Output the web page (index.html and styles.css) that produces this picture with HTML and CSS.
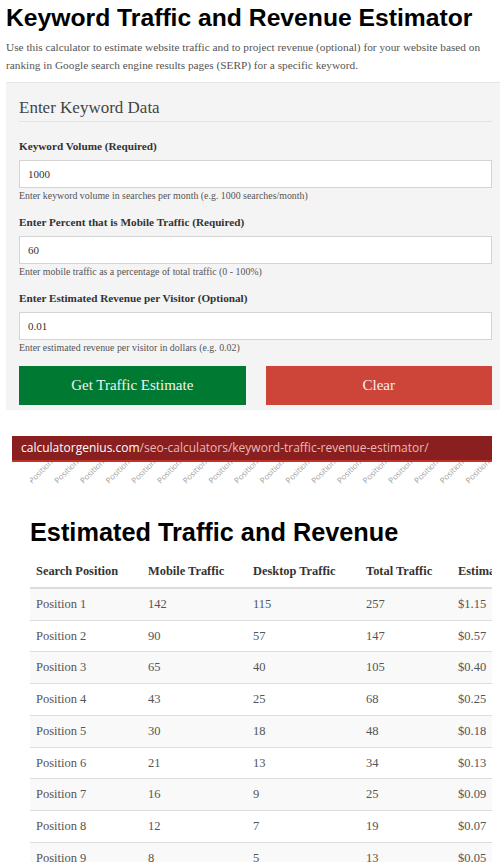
FILE: index.html
```html
<!DOCTYPE html>
<html lang="en">
<head>
<meta charset="utf-8">
<title>Keyword Traffic and Revenue Estimator</title>
<link rel="stylesheet" href="styles.css">
</head>
<body>
<div class="page">
  <h1 class="title">Keyword Traffic and Revenue Estimator</h1>
  <p class="intro">Use this calculator to estimate website traffic and to project revenue (optional) for your website based on ranking in Google search engine results pages (SERP) for a specific keyword.</p>

  <div class="panel">
    <h2 class="panel-title">Enter Keyword Data</h2>

    <div class="field">
      <label class="field-label">Keyword Volume (Required)</label>
      <div class="input">1000</div>
      <div class="help">Enter keyword volume in searches per month (e.g. 1000 searches/month)</div>
    </div>

    <div class="field">
      <label class="field-label">Enter Percent that is Mobile Traffic (Required)</label>
      <div class="input">60</div>
      <div class="help">Enter mobile traffic as a percentage of total traffic (0 - 100%)</div>
    </div>

    <div class="field">
      <label class="field-label">Enter Estimated Revenue per Visitor (Optional)</label>
      <div class="input">0.01</div>
      <div class="help">Enter estimated revenue per visitor in dollars (e.g. 0.02)</div>
    </div>

    <div class="buttons">
      <div class="btn btn-go">Get Traffic Estimate</div>
      <div class="btn btn-clear">Clear</div>
    </div>
  </div>

  <div class="urlbar"><span class="host">calculatorgenius.com</span><span class="path">/seo-calculators/keyword-traffic-revenue-estimator/</span></div>
  <svg class="axis" width="468" height="25" viewBox="0 0 468 25" xmlns="http://www.w3.org/2000/svg">
    <g class="axis-labels">
      <text x="2" y="22" transform="rotate(-45 2 22)">Position 1</text>
      <text x="27.7" y="22" transform="rotate(-45 27.7 22)">Position 2</text>
      <text x="53.4" y="22" transform="rotate(-45 53.4 22)">Position 3</text>
      <text x="79.1" y="22" transform="rotate(-45 79.1 22)">Position 4</text>
      <text x="104.8" y="22" transform="rotate(-45 104.8 22)">Position 5</text>
      <text x="130.5" y="22" transform="rotate(-45 130.5 22)">Position 6</text>
      <text x="156.2" y="22" transform="rotate(-45 156.2 22)">Position 7</text>
      <text x="181.9" y="22" transform="rotate(-45 181.9 22)">Position 8</text>
      <text x="207.6" y="22" transform="rotate(-45 207.6 22)">Position 9</text>
      <text x="233.3" y="22" transform="rotate(-45 233.3 22)">Position 10</text>
      <text x="259" y="22" transform="rotate(-45 259 22)">Position 11</text>
      <text x="284.7" y="22" transform="rotate(-45 284.7 22)">Position 12</text>
      <text x="310.4" y="22" transform="rotate(-45 310.4 22)">Position 13</text>
      <text x="336.1" y="22" transform="rotate(-45 336.1 22)">Position 14</text>
      <text x="361.8" y="22" transform="rotate(-45 361.8 22)">Position 15</text>
      <text x="387.5" y="22" transform="rotate(-45 387.5 22)">Position 16</text>
      <text x="413.2" y="22" transform="rotate(-45 413.2 22)">Position 17</text>
      <text x="438.9" y="22" transform="rotate(-45 438.9 22)">Position 18</text>
    </g>
  </svg>

  <h2 class="results-title">Estimated Traffic and Revenue</h2>
  <div class="table-wrap">
    <table class="results">
      <colgroup>
        <col class="c1"><col class="c2"><col class="c3"><col class="c4"><col class="c5">
      </colgroup>
      <thead>
        <tr><th>Search Position</th><th>Mobile Traffic</th><th>Desktop Traffic</th><th>Total Traffic</th><th>Estimated Revenue</th></tr>
      </thead>
      <tbody>
        <tr><td>Position 1</td><td>142</td><td>115</td><td>257</td><td>$1.15</td></tr>
        <tr><td>Position 2</td><td>90</td><td>57</td><td>147</td><td>$0.57</td></tr>
        <tr><td>Position 3</td><td>65</td><td>40</td><td>105</td><td>$0.40</td></tr>
        <tr><td>Position 4</td><td>43</td><td>25</td><td>68</td><td>$0.25</td></tr>
        <tr><td>Position 5</td><td>30</td><td>18</td><td>48</td><td>$0.18</td></tr>
        <tr><td>Position 6</td><td>21</td><td>13</td><td>34</td><td>$0.13</td></tr>
        <tr><td>Position 7</td><td>16</td><td>9</td><td>25</td><td>$0.09</td></tr>
        <tr><td>Position 8</td><td>12</td><td>7</td><td>19</td><td>$0.07</td></tr>
        <tr><td>Position 9</td><td>8</td><td>5</td><td>13</td><td>$0.05</td></tr>
        <tr><td>Position 10</td><td>6</td><td>4</td><td>10</td><td>$0.04</td></tr>
      </tbody>
    </table>
  </div>
</div>
</body>
</html>
```

FILE: styles.css
```css
html, body {
  margin: 0;
  padding: 0;
  background: #ffffff;
  overflow: hidden;
}

body {
  font-family: "Liberation Serif", "Times New Roman", serif;
  color: #333;
}

.page {
  padding-left: 6px;
}

.title {
  font-family: "Liberation Sans", Arial, sans-serif;
  font-weight: bold;
  font-size: 24.7px;
  line-height: 30px;
  color: #000;
  margin: 3px 0 0 0;
}

.intro {
  font-size: 11.3px;
  line-height: 18px;
  color: #555;
  margin: 5px 6px 0 0;
}

.panel {
  margin-top: 8px;
  background: #f4f4f4;
  border-top: 1px solid #e6e6e6;
  padding: 15px 8px 5px 13px;
}

.panel-title {
  font-weight: normal;
  font-size: 17px;
  line-height: 20px;
  color: #444;
  margin: 0;
  padding-bottom: 3px;
  border-bottom: 1px solid #e3e3e3;
}

.field {
  display: flex;
  flex-direction: column;
}

.field-label {
  display: block;
  margin-top: 17px;
  font-weight: bold;
  font-size: 11.2px;
  line-height: 14px;
  color: #333;
}

.field + .field .field-label {
  margin-top: 13px;
}

.input {
  margin-top: 7px;
  box-sizing: border-box;
  height: 28px;
  border: 1px solid #d4d4d4;
  background: #fff;
  padding: 0 8px;
  font-size: 11px;
  line-height: 26px;
  color: #333;
}

.help {
  margin-top: 2px;
  font-size: 9.9px;
  line-height: 12px;
  color: #555;
}

.buttons {
  display: flex;
  gap: 20px;
  margin-top: 12px;
}

.btn {
  flex: 1;
  height: 39px;
  line-height: 39px;
  text-align: center;
  font-size: 15px;
  color: #f2f2f2;
}

.btn-go {
  background: #007a33;
}

.btn-clear {
  background: #cc4538;
}

.urlbar {
  margin: 26px 8px 0 6px;
  height: 24px;
  line-height: 23px;
  background: #8a1f1f;
  border-bottom: 2px solid #c2302a;
  padding-left: 9px;
  font-family: "Open Sans", "Noto Sans", sans-serif;
  font-size: 12px;
  white-space: nowrap;
  overflow: hidden;
}

.host {
  color: #ffffff;
}

.path {
  color: #e9b9b7;
}

.axis {
  display: block;
  margin-left: 24px;
  overflow: hidden;
}

.axis-labels {
  font-family: "Open Sans", "Noto Sans", sans-serif;
  font-size: 8px;
  fill: #a0a0a0;
}

.results-title {
  font-family: "Liberation Sans", Arial, sans-serif;
  font-weight: bold;
  font-size: 25.3px;
  line-height: 30px;
  color: #000;
  margin: 30px 0 0 24px;
}

.table-wrap {
  margin: 8px 8px 0 24px;
  overflow: hidden;
}

.results {
  table-layout: fixed;
  width: 540px;
  border-collapse: collapse;
  border-spacing: 0;
}

.c1 { width: 112px; }
.c2 { width: 105px; }
.c3 { width: 113px; }
.c4 { width: 92px; }
.c5 { width: 118px; }

.results th {
  text-align: left;
  font-size: 12.4px;
  font-weight: bold;
  color: #333;
  padding: 9px 6px 8px 6px;
  line-height: 15px;
  border-bottom: 2px solid #dddddd;
  white-space: nowrap;
  overflow: hidden;
}

.results td {
  font-size: 12.5px;
  color: #555;
  padding: 8px 6px;
  line-height: 14.7px;
  border-top: 1px solid #dddddd;
  white-space: nowrap;
}

.results tbody tr:nth-child(odd) td {
  background: #f9f9f9;
}

.results tbody tr:first-child td {
  border-top: 0;
}
```
